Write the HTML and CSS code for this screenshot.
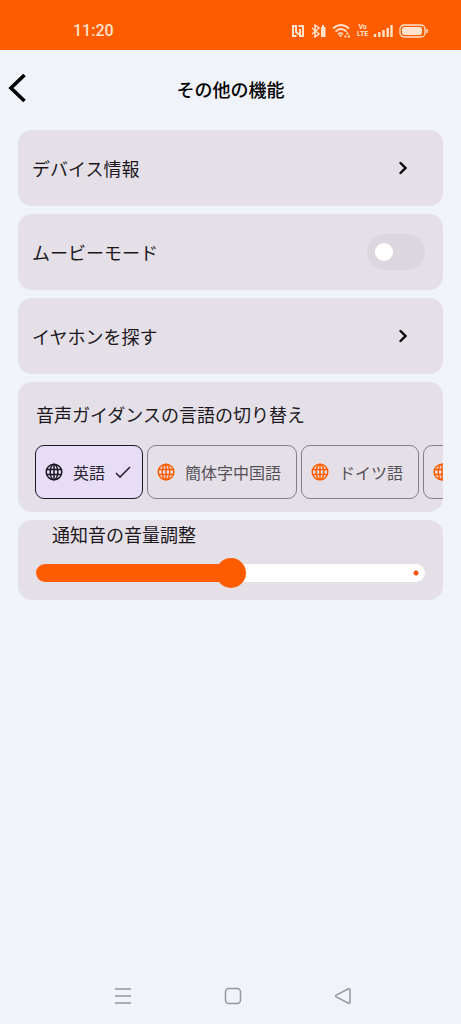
FILE: index.html
```html
<!DOCTYPE html>
<html lang="ja">
<head>
<meta charset="utf-8">
<meta name="viewport" content="width=device-width, initial-scale=1">
<title>その他の機能</title>
<link rel="stylesheet" href="styles.css">
</head>
<body>
<svg class="sprite" aria-hidden="true">
  <symbol id="globe" viewBox="0 0 18 18">
    <g fill="none" stroke="currentColor" stroke-width="1.5">
      <circle cx="9" cy="9" r="7.8"/>
      <ellipse cx="9" cy="9" rx="3.8" ry="7.8"/>
      <path d="M9 1v16M1.800 6.500h14.400M1.800 11.500h14.400"/>
    </g>
  </symbol>
  <symbol id="chevron" viewBox="0 0 10 14">
    <path d="M2.500 2l5 5-5 5" fill="none" stroke="currentColor" stroke-width="2.400" stroke-linecap="round"/>
  </symbol>
</svg>
<div class="screen">
  <div class="status">
    <span class="time">11:20</span>
    <div class="status-icons">
      <svg width="14" height="14" viewBox="0 0 14 14"><g fill="none" stroke="currentColor" stroke-width="2"><path d="M5.500 12H2V2h3v6l3 2.500"/><path d="M7.500 2H12v10H9V5"/></g></svg>
      <svg width="15" height="14" viewBox="0 0 15 14"><path d="M1 4l7 6-4 3V1l4 3-7 6" fill="none" stroke="currentColor" stroke-width="1.500"/><path d="M10 3h1V1h2v2h1.500v10H10z" fill="currentColor"/></svg>
      <svg width="19" height="14" viewBox="0 0 19 14"><g fill="none" stroke="currentColor" stroke-width="1.700"><path d="M1 4.500q8-7 16 0M3.500 7.500q5.500-5 11 0M6 10.300q2.500-2.200 5 0"/></g><path d="M7 11.500q1.500-1.500 3 0L8.500 13.500zM14.500 8.500h2V10.500h-2zM12.500 11.500h2v2h-2zM16 11.500h2v2h-2z" fill="currentColor"/></svg>
      <span class="volte"><span>Vo</span><span>LTE</span></span>
      <svg width="20" height="14" viewBox="0 0 20 14"><path d="M2 10v3M6.300 8v5M10.500 6v7M14.700 4v9M18.500 1v12" stroke="currentColor" stroke-width="2.400"/></svg>
      <svg width="30" height="14" viewBox="0 0 30 14"><rect x="1" y="1" width="25" height="12" rx="4" fill="none" stroke="currentColor" stroke-width="1.300"/><rect x="3" y="3" width="20" height="8" rx="2" fill="currentColor"/><path d="M28 5v4" stroke="currentColor" stroke-width="1.500"/></svg>
    </div>
  </div>
  <header class="header">
    <button class="back" type="button" aria-label="戻る"><svg width="20" height="30" viewBox="0 0 20 30"><path d="M16.500 1L3 14l13.500 13" fill="none" stroke="currentColor" stroke-width="3.600"/></svg></button>
    <h1 class="title">その他の機能</h1>
  </header>
  <main class="list">
    <button class="card row" type="button"><span>デバイス情報</span><svg class="chevron"><use href="#chevron"/></svg></button>
    <div class="card row"><label for="movie">ムービーモード</label><input class="switch" id="movie" type="checkbox" role="switch"></div>
    <button class="card row" type="button"><span>イヤホンを探す</span><svg class="chevron"><use href="#chevron"/></svg></button>
    <section class="card language">
      <h2 class="language-title">音声ガイダンスの言語の切り替え</h2>
      <div class="chips">
        <button class="chip selected" type="button" aria-pressed="true"><svg class="globe"><use href="#globe"/></svg><span>英語</span><svg class="check" viewBox="0 0 16 14"><path d="M1 8l4 4L15 2" fill="none" stroke="currentColor" stroke-width="1.600"/></svg></button>
        <button class="chip" type="button" aria-pressed="false"><svg class="globe"><use href="#globe"/></svg><span>簡体字中国語</span></button>
        <button class="chip" type="button" aria-pressed="false"><svg class="globe"><use href="#globe"/></svg><span>ドイツ語</span></button>
        <button class="chip" type="button" aria-pressed="false"><svg class="globe"><use href="#globe"/></svg></button>
      </div>
    </section>
    <section class="card volume">
      <label class="volume-label" for="volume">通知音の音量調整</label>
      <input class="slider" id="volume" type="range" min="0" max="100" value="50" style="--level: 50%">
    </section>
  </main>
  <nav class="nav">
    <button type="button" aria-label="履歴"><svg width="18" height="18" viewBox="0 0 18 18"><path d="M1 2h16M1 9h16M1 16h16"/></svg></button>
    <button type="button" aria-label="ホーム"><svg width="18" height="18" viewBox="0 0 18 18"><rect x="1.500" y="1.500" width="15" height="15" rx="3.500"/></svg></button>
    <button type="button" aria-label="戻る"><svg width="18" height="18" viewBox="0 0 18 18"><path d="M2.200 8.200L14.500 1.800q1.500-.5 1.500 1v12.400q0 1.500-1.500 1L2.200 9.800q-1-.8 0-1.600z"/></svg></button>
  </nav>
</div>
</body>
</html>
```
FILE: styles.css
```css
* { box-sizing: border-box; }

body {
  margin: 0;
  background: #f0f3f9;
  color: #1b171d;
  font-family: "Noto Sans CJK JP", sans-serif;
  font-size: 18px;
  line-height: 24px;
}

button {
  margin: 0;
  padding: 0;
  border: 0;
  background: none;
  color: inherit;
  font: inherit;
}

svg { display: block; flex: none; }

.sprite { position: absolute; width: 0; height: 0; }

.screen {
  display: flex;
  flex-direction: column;
  min-height: 100vh;
}

.status {
  display: flex;
  align-items: center;
  justify-content: space-between;
  padding: 19px 32px 7px 73px;
  background: #ff5c00;
  color: #ffe2cc;
}

.time {
  font-family: Roboto, sans-serif;
  font-size: 16px;
  font-weight: 500;
}

.status-icons { display: flex; align-items: center; gap: 6px; }

.volte {
  display: grid;
  justify-items: center;
  width: 10px;
  font-family: Roboto, sans-serif;
  font-size: 7px;
  line-height: 7px;
  font-weight: 700;
}

.header {
  display: grid;
  grid-template-columns: 40px 1fr 40px;
  align-items: center;
  padding: 24px 0 26px;
}

.back { padding-left: 8px; color: #000; }

.title {
  margin: 0;
  color: #000;
  font-size: 18px;
  line-height: 30px;
  font-weight: 500;
  text-align: center;
}

.list {
  display: flex;
  flex-direction: column;
  gap: 8px;
  padding: 0 18px;
}

.card {
  border-radius: 14px;
  background: #e5e0e7;
}

.row {
  display: flex;
  align-items: center;
  justify-content: space-between;
  min-height: 76px;
  padding: 0 18px 0 14px;
  text-align: left;
}

.chevron {
  width: 10px;
  height: 14px;
  margin-right: 17px;
  color: #000;
}

.switch {
  appearance: none;
  width: 58px;
  height: 36px;
  margin: 0;
  padding: 9px 8px;
  border-radius: 18px;
  background: #dcd7df;
}

.switch::before {
  content: "";
  display: block;
  width: 18px;
  height: 18px;
  border-radius: 50%;
  background: #fff;
}

.switch:checked { background: #ff5c00; }
.switch:checked::before { margin-left: auto; }

.language { padding: 20px 0 13px 17px; }

.language-title {
  margin: 0 0 19px;
  padding-left: 1px;
  font-size: 18px;
  font-weight: 400;
}

.chips {
  display: flex;
  gap: 4px;
  overflow-x: auto;
  scrollbar-width: none;
}

.chip {
  display: flex;
  flex: none;
  align-items: center;
  gap: 10px;
  min-width: 108px;
  height: 54px;
  padding: 0 15px 0 9px;
  border: 1px solid #858088;
  border-radius: 9px;
  color: #555058;
  font-size: 16px;
  white-space: nowrap;
}

.selected {
  padding-right: 10px;
  border-color: #1c1722;
  background: #e7ddf7;
  color: #2b2433;
}

.globe { width: 18px; height: 18px; color: #ff5c00; }
.selected .globe { color: #1c1722; }
.check { width: 16px; height: 14px; }

.volume { padding: 2px 18px 12px; }

.volume-label { display: block; padding-left: 16px; }

.slider {
  appearance: none;
  display: block;
  width: 100%;
  height: 30px;
  margin: 12px 0 0;
  background: none;
}

.slider::-webkit-slider-runnable-track {
  height: 18px;
  border-radius: 9px;
  background:
    radial-gradient(circle at calc(100% - 9px) 50%, #ee5b0c 2px, transparent 3px),
    linear-gradient(to right, #ff5c00 var(--level), #fff var(--level));
}

.slider::-webkit-slider-thumb {
  appearance: none;
  width: 30px;
  height: 30px;
  margin-top: -6px;
  border-radius: 50%;
  background: #ff5c00;
}

.nav {
  display: flex;
  justify-content: center;
  gap: 92px;
  margin-top: auto;
  padding: 0 0 19px 5px;
}

.nav svg {
  fill: none;
  stroke: #95979d;
  stroke-width: 1.5;
}
```
